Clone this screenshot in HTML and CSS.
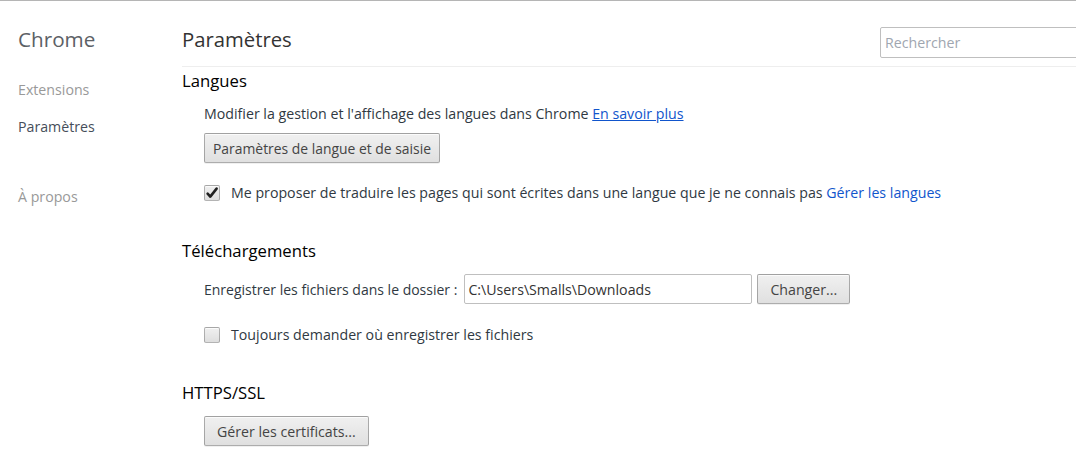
FILE: index.html
```html
<!DOCTYPE html>
<html lang="fr">
<head>
<meta charset="utf-8">
<title>Paramètres</title>
<link rel="stylesheet" href="styles.css">
</head>
<body>
<div class="app">
  <nav class="sidebar">
    <div class="brand">Chrome</div>
    <ul class="nav">
      <li class="nav-item">Extensions</li>
      <li class="nav-item active">Paramètres</li>
      <li class="nav-item about">À propos</li>
    </ul>
  </nav>
  <main class="main">
    <header class="header">
      <h1 class="title">Paramètres</h1>
      <input class="search" type="text" placeholder="Rechercher">
    </header>

    <section class="section first">
      <h3 class="section-title">Langues</h3>
      <div class="section-body">
        <div class="row text-row">Modifier la gestion et l'affichage des langues dans Chrome <a class="link underline" href="#">En savoir plus</a></div>
        <div class="row btn-row"><button class="btn narrow">Paramètres de langue et de saisie</button></div>
        <label class="row check-row gap-lg">
          <span class="checkbox checked">
            <svg viewBox="0 0 16 16" width="16" height="16"><path d="M3.6 8.6 L6.3 11.6 L12.6 3.6" fill="none" stroke="#202020" stroke-width="2.6" stroke-linecap="round" stroke-linejoin="round"/></svg>
          </span>
          <span>Me proposer de traduire les pages qui sont écrites dans une langue que je ne connais pas <a class="link" href="#">Gérer les langues</a></span>
        </label>
      </div>
    </section>

    <section class="section">
      <h3 class="section-title">Téléchargements</h3>
      <div class="section-body">
        <div class="row folder-row">
          <span>Enregistrer les fichiers dans le dossier :</span>
          <input class="path" type="text" value="C:\Users\Smalls\Downloads" readonly>
          <button class="btn">Changer...</button>
        </div>
        <label class="row check-row gap-md">
          <span class="checkbox"></span>
          <span>Toujours demander où enregistrer les fichiers</span>
        </label>
      </div>
    </section>

    <section class="section">
      <h3 class="section-title">HTTPS/SSL</h3>
      <div class="section-body">
        <div class="row btn-row tight"><button class="btn">Gérer les certificats...</button></div>
      </div>
    </section>
  </main>
</div>
</body>
</html>
```

FILE: styles.css
```css
html, body {
  margin: 0;
  padding: 0;
  background: #fff;
  overflow: hidden;
}

body {
  border-top: 1px solid #b5b5b5;
  font-family: "Open Sans", "Noto Sans", sans-serif;
  font-size: 14.2px;
  color: #303942;
}

.app {
  display: flex;
  height: 459px;
}

.sidebar {
  width: 164px;
  padding-left: 18px;
  flex: none;
}

.brand {
  margin-top: 23px;
  font-size: 20.7px;
  line-height: 30px;
  color: #5c6166;
}

.nav {
  list-style: none;
  margin: 26px 0 0;
  padding: 0;
}

.nav-item {
  line-height: 20px;
  color: #999;
  margin-bottom: 17px;
}

.nav-item.active {
  color: #464e5a;
}

.nav-item.about {
  margin-top: 50px;
}

.main {
  flex: 1;
  min-width: 0;
}

.header {
  height: 65px;
  border-bottom: 1px solid #eee;
  display: flex;
  justify-content: space-between;
  align-items: flex-start;
}

.title {
  margin: 23px 0 0;
  font-size: 20.3px;
  line-height: 30px;
  font-weight: normal;
  color: #333;
}

.search {
  margin-top: 26px;
  margin-right: -4px;
  width: 200px;
  height: 31px;
  box-sizing: border-box;
  border: 1px solid #bfbfbf;
  border-radius: 2px;
  padding: 0 4px;
  font-family: inherit;
  font-size: 14.2px;
  color: #333;
  outline: none;
}

.search::placeholder {
  color: #a0a6b0;
}

.section {
  margin-top: 37px;
}

.section.first {
  margin-top: 3px;
}

.section-title {
  margin: 0;
  font-size: 16.7px;
  line-height: 22px;
  font-weight: normal;
  color: #000;
}

.section-body {
  padding-left: 22px;
}

.row {
  display: flex;
  align-items: center;
}

.text-row {
  margin-top: 12px;
  line-height: 20px;
  display: block;
}

.btn-row {
  margin-top: 9px;
}

.btn-row.tight {
  margin-top: 12px;
}

.check-row {
  line-height: 20px;
  gap: 11px;
}

.gap-lg {
  margin-top: 20px;
}

.gap-md {
  margin-top: 21px;
}

.folder-row {
  margin-top: 12px;
  font-size: 14px;
}

.folder-row .path {
  margin-left: 7px;
}

.folder-row .btn {
  margin-left: 5px;
}

.link {
  color: #15c;
  text-decoration: none;
}

.link.underline {
  text-decoration: underline;
}

.btn {
  height: 30px;
  box-sizing: border-box;
  padding: 0 12px;
  border: 1px solid rgba(0, 0, 0, 0.28);
  border-radius: 2px;
  background: linear-gradient(#f0f0f0, #e0e0e0);
  box-shadow: inset 0 1px 0 rgba(255, 255, 255, 0.75), 0 1px 0 rgba(0, 0, 0, 0.06);
  font-family: inherit;
  font-size: 14.2px;
  color: #444;
  cursor: pointer;
}

.btn.narrow {
  padding: 0 8px;
  font-size: 13.9px;
}

.path {
  width: 288px;
  height: 30px;
  box-sizing: border-box;
  border: 1px solid #bfbfbf;
  border-radius: 2px;
  padding: 0 3px;
  font-family: inherit;
  font-size: 14.2px;
  color: #333;
  outline: none;
}

.checkbox {
  width: 16px;
  height: 16px;
  box-sizing: border-box;
  border: 1px solid rgba(0, 0, 0, 0.25);
  border-radius: 2px;
  background: linear-gradient(#f0f0f0, #dedede);
  box-shadow: inset 0 1px 0 rgba(255, 255, 255, 0.75);
  position: relative;
  flex: none;
}

.checkbox svg {
  position: absolute;
  left: -1px;
  top: -1px;
}
```
